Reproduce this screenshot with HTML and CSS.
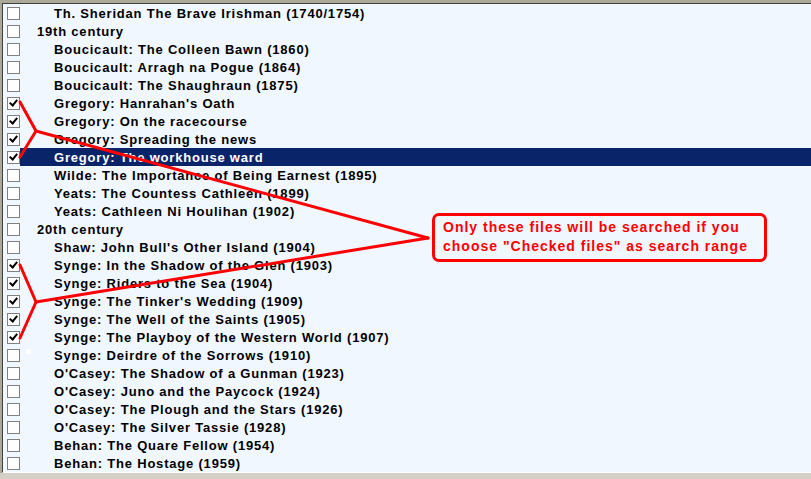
FILE: index.html
```html
<!DOCTYPE html>
<html lang="en">
<head>
    <meta charset="UTF-8">
    <title>Checked files</title>
    <link rel="stylesheet" href="styles.css">
</head>
<body>
    <div class="frame">
        <div class="list">
            <div class="row"><span class="box"></span><span class="label item">Th. Sheridan The Brave Irishman (1740/1754)</span></div>
            <div class="row"><span class="box"></span><span class="label group">19th century</span></div>
            <div class="row"><span class="box"></span><span class="label item">Boucicault: The Colleen Bawn (1860)</span></div>
            <div class="row"><span class="box"></span><span class="label item">Boucicault: Arragh na Pogue (1864)</span></div>
            <div class="row"><span class="box"></span><span class="label item">Boucicault: The Shaughraun (1875)</span></div>
            <div class="row"><span class="box checked"></span><span class="label item">Gregory: Hanrahan's Oath</span></div>
            <div class="row"><span class="box checked"></span><span class="label item">Gregory: On the racecourse</span></div>
            <div class="row"><span class="box checked"></span><span class="label item">Gregory: Spreading the news</span></div>
            <div class="row selected"><span class="box checked"></span><span class="label item">Gregory: The workhouse ward</span></div>
            <div class="row"><span class="box"></span><span class="label item">Wilde: The Importance of Being Earnest (1895)</span></div>
            <div class="row"><span class="box"></span><span class="label item">Yeats: The Countess Cathleen (1899)</span></div>
            <div class="row"><span class="box"></span><span class="label item">Yeats: Cathleen Ni Houlihan (1902)</span></div>
            <div class="row"><span class="box"></span><span class="label group">20th century</span></div>
            <div class="row"><span class="box"></span><span class="label item">Shaw: John Bull's Other Island (1904)</span></div>
            <div class="row"><span class="box checked"></span><span class="label item">Synge: In the Shadow of the Glen (1903)</span></div>
            <div class="row"><span class="box checked"></span><span class="label item">Synge: Riders to the Sea (1904)</span></div>
            <div class="row"><span class="box checked"></span><span class="label item">Synge: The Tinker's Wedding (1909)</span></div>
            <div class="row"><span class="box checked"></span><span class="label item">Synge: The Well of the Saints (1905)</span></div>
            <div class="row"><span class="box checked"></span><span class="label item">Synge: The Playboy of the Western World (1907)</span></div>
            <div class="row"><span class="box"></span><span class="dot"></span><span class="label item">Synge: Deirdre of the Sorrows (1910)</span></div>
            <div class="row"><span class="box"></span><span class="label item">O'Casey: The Shadow of a Gunman (1923)</span></div>
            <div class="row"><span class="box"></span><span class="label item">O'Casey: Juno and the Paycock (1924)</span></div>
            <div class="row"><span class="box"></span><span class="label item">O'Casey: The Plough and the Stars (1926)</span></div>
            <div class="row"><span class="box"></span><span class="label item">O'Casey: The Silver Tassie (1928)</span></div>
            <div class="row"><span class="box"></span><span class="label item">Behan: The Quare Fellow (1954)</span></div>
            <div class="row"><span class="box"></span><span class="label item">Behan: The Hostage (1959)</span></div>

            <!-- annotation over the list -->
            <svg class="arrows" width="811" height="479" viewBox="0 0 811 479">
                <g fill="none" stroke="#ff0000" stroke-width="3" stroke-linecap="round">
                    <polyline points="20,102 36,131 20,157"/>
                    <line x1="36" y1="131" x2="428" y2="238"/>
                    <polyline points="20,265 36,302 20,338"/>
                    <line x1="36" y1="302" x2="428" y2="238"/>
                </g>
            </svg>
            <div class="callout">Only these files will be searched if you<br>choose "Checked files" as search range</div>
        </div>
    </div>
</body>
</html>
```

FILE: styles.css
```css
body {
    margin: 0;
    width: 811px;
    height: 479px;
    overflow: hidden;
    background-color: #d4d0c8;
    font-family: "Liberation Sans", Arial, sans-serif;
}

.frame {
    border-top: 3px solid #aca899;
    border-left: 2px solid #aca899;
    height: 470px;
}

.list {
    position: relative;
    height: 468px;
    background-color: #f0f7ff;
    border-top: 1px solid #404040;
    border-left: 1px solid #404040;
    border-bottom: 1px solid #ffffff;
}

.row {
    display: flex;
    align-items: center;
    height: 18px;
    padding-left: 4px;
    position: relative;
}

.row.selected::after {
    content: "";
    position: absolute;
    left: 17px;
    right: 0;
    top: 0;
    bottom: 0;
    background-color: #0a246a;
    z-index: 0;
}

.box {
    width: 11px;
    height: 11px;
    border: 1px solid #808080;
    background-color: #ffffff;
    position: relative;
    flex-shrink: 0;
}

.box.checked::after {
    content: "";
    position: absolute;
    left: 3px;
    top: 0px;
    width: 3px;
    height: 6px;
    border-right: 2px solid #000;
    border-bottom: 2px solid #000;
    transform: rotate(40deg);
}

.dot {
    position: absolute;
    left: 23px;
    top: 3px;
    width: 5px;
    height: 5px;
    background-color: #ffffff;
}

.label {
    font-size: 13px;
    font-weight: bold;
    letter-spacing: 0.8px;
    color: #000;
    white-space: nowrap;
    position: relative;
    z-index: 1;
}

.label.group {
    margin-left: 17px;
}

.label.item {
    margin-left: 34px;
}

.selected .label {
    color: #ffffff;
}

.arrows {
    position: absolute;
    left: -3px;
    top: -4px;
    z-index: 2;
}

.callout {
    position: absolute;
    left: 429px;
    top: 209px;
    width: 321px;
    padding: 2px 0 3px 8px;
    border: 3px solid #ff0000;
    border-radius: 7px;
    background-color: #f0f7ff;
    color: #ff0000;
    font-size: 14px;
    font-weight: bold;
    letter-spacing: 1px;
    line-height: 19px;
    z-index: 3;
}
```
